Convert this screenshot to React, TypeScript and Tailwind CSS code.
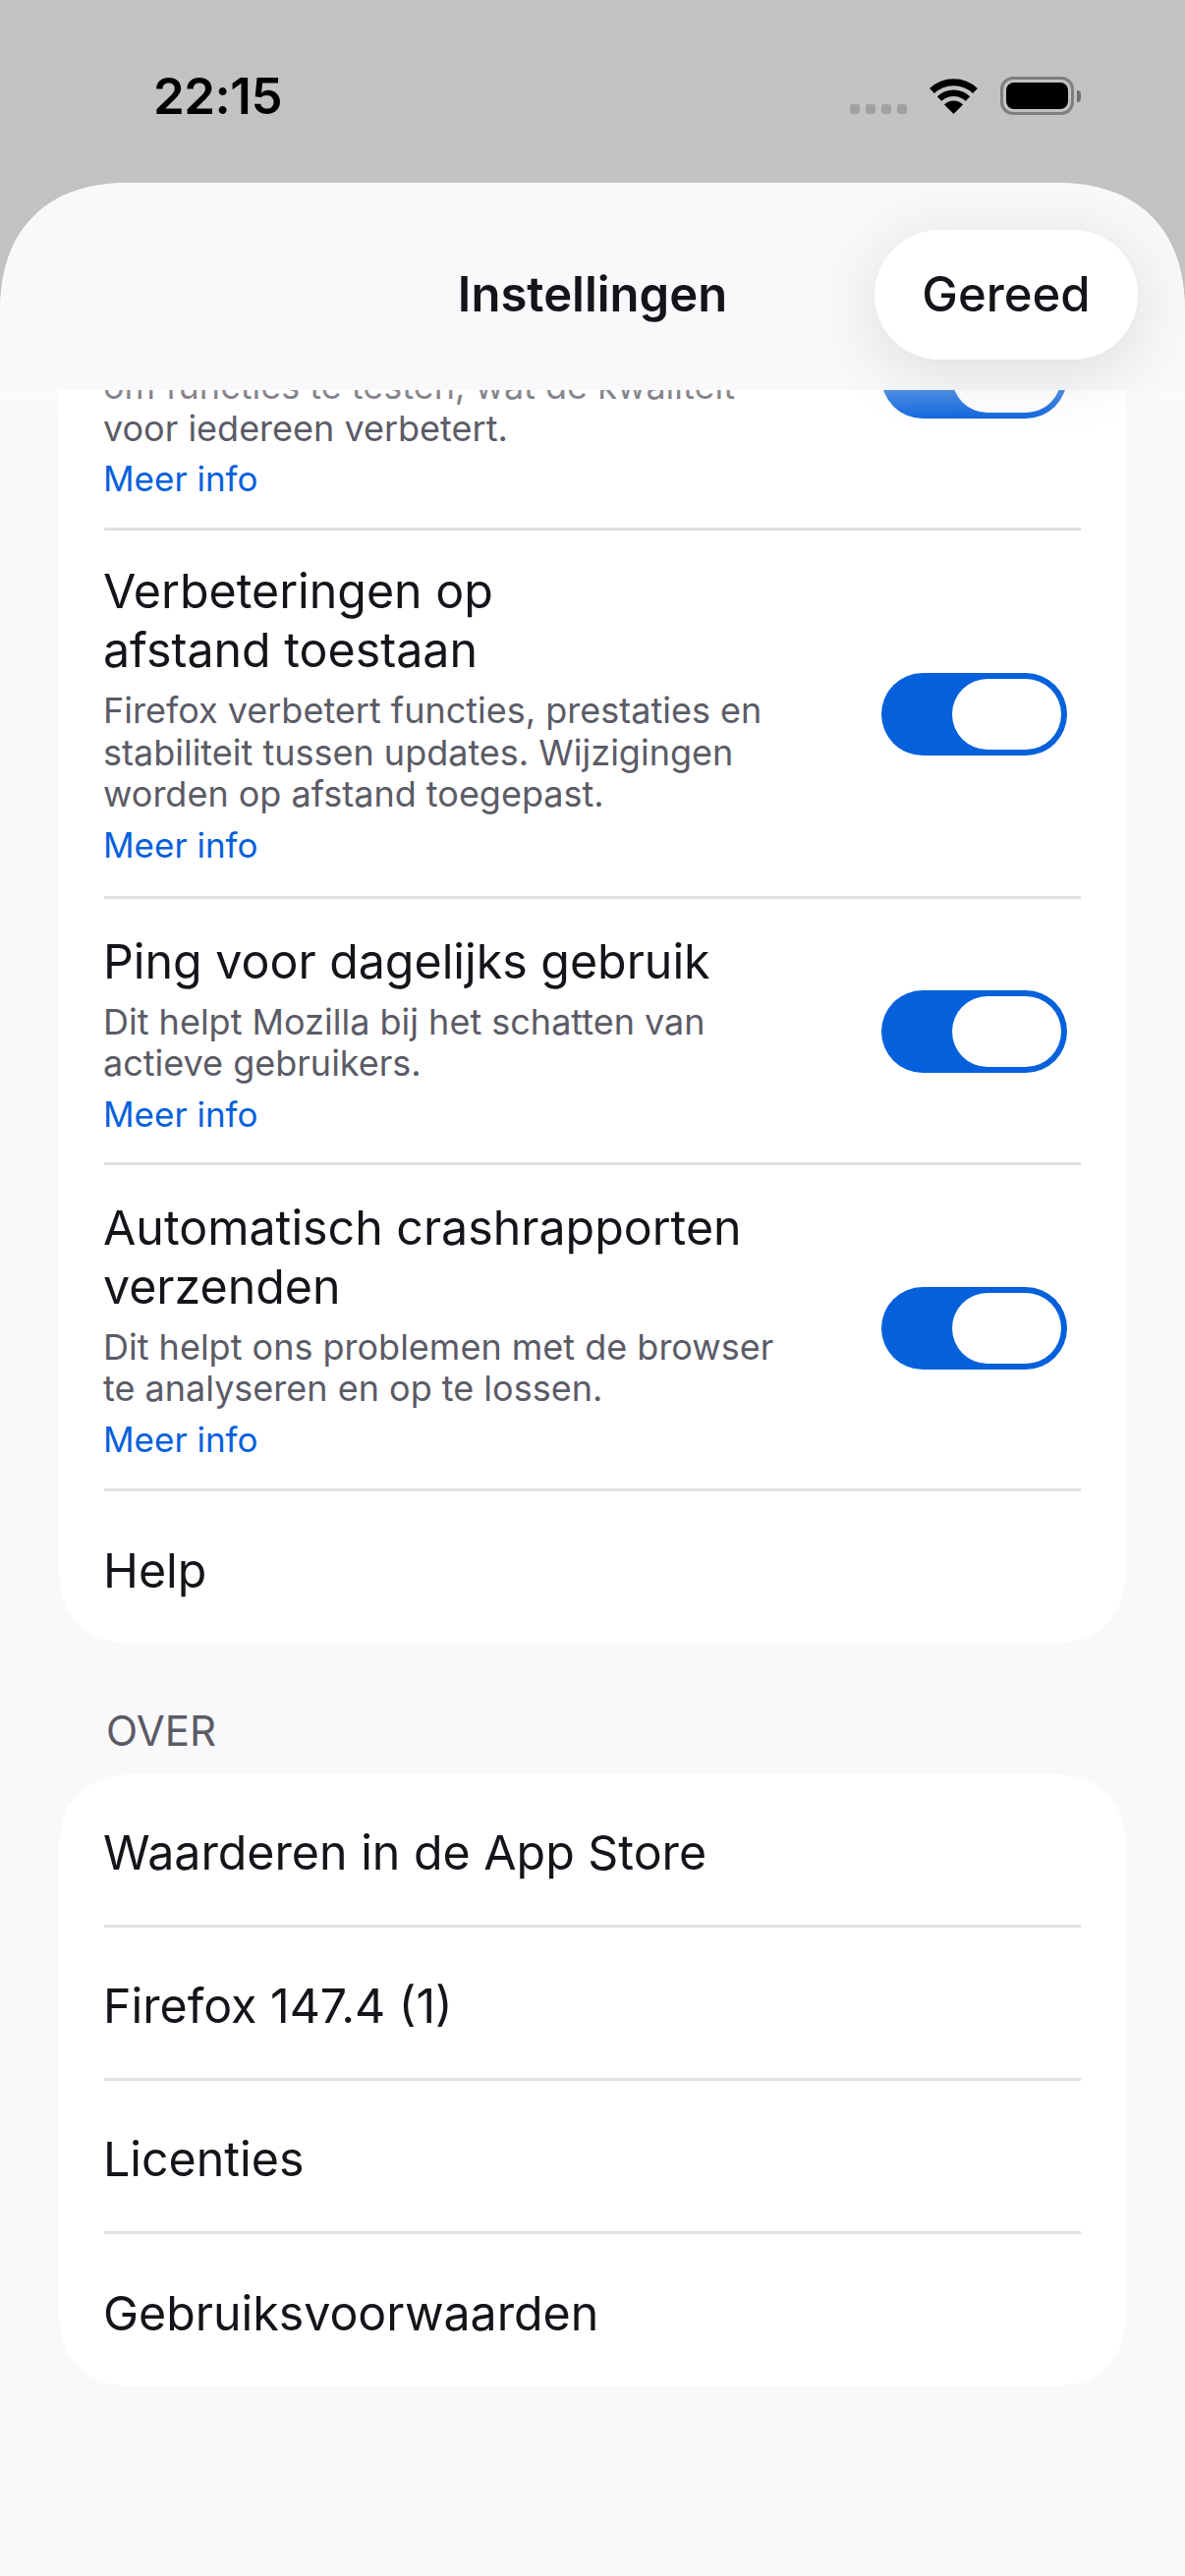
const ink = 'text-[#15141a]';

function StatusBar() {
  return (
    <div className="h-[186px] shrink-0 flex items-start justify-between pl-[156px] pr-[106px] pt-[68px]">
      <span className="text-[51px] leading-[60px] font-semibold text-black tracking-[-0.5px]">22:15</span>
      <div className="flex items-start pt-[10px]">
        <div className="flex gap-[6px] mt-[28px] mr-[22px]">
          <i className="block w-[10px] h-[10px] rounded-[3px] bg-[#a1a1a3]" />
          <i className="block w-[10px] h-[10px] rounded-[3px] bg-[#a1a1a3]" />
          <i className="block w-[10px] h-[10px] rounded-[3px] bg-[#a1a1a3]" />
          <i className="block w-[10px] h-[10px] rounded-[3px] bg-[#a1a1a3]" />
        </div>
        <svg width="51" height="37" viewBox="0 0 51 37" className="mt-[1px] mr-[22px]">
          <path d="M3.5 13.5A32 32 0 0 1 47.5 13.5" fill="none" stroke="#000" strokeWidth="7" />
          <path d="M11 21.5A21 21 0 0 1 40 21.5" fill="none" stroke="#000" strokeWidth="6.5" />
          <path d="M25.5 37L16 27.5A13.5 13.5 0 0 1 35 27.5Z" fill="#000" />
        </svg>
        <div className="flex items-center">
          <div className="w-[75px] h-[39px] rounded-[13px] border-[3px] border-[#7f7f81] p-[3px]">
            <div className="w-full h-full rounded-[8px] bg-black" />
          </div>
          <div className="w-[4px] h-[12px] ml-[3px] rounded-r-[4px] bg-[#6f6f71]" />
        </div>
      </div>
    </div>
  );
}

function Toggle() {
  return (
    <div className="w-[189px] h-[84px] shrink-0 mt-[3px] rounded-full bg-[#0560dc] p-[6px] flex justify-end">
      <div className="w-[111px] h-[72px] rounded-full bg-white" />
    </div>
  );
}

function Row({ title, lines, pad }: { title?: string[]; lines: string[]; pad: string }) {
  return (
    <div className="mx-[46px] flex items-center justify-between border-b-[3px] border-[#dfdfe4] pr-[14px]">
      <div className={`-ml-[1px] ${pad}`}>
        {title?.map((t) => (
          <div key={t} className={`text-[48.3px] leading-[60px] ${ink}`}>{t}</div>
        ))}
        <div className="mt-[10px]">
          {lines.map((l) => (
            <div key={l} className="text-[36px] leading-[42.5px] text-[#5b5b66]">{l}</div>
          ))}
        </div>
        <div className="text-[35px] leading-[42px] text-[#0560dc] mt-[9px]">Meer info</div>
      </div>
      <Toggle />
    </div>
  );
}

function PlainRow({ label, last }: { label: string; last?: boolean }) {
  return (
    <div className={`mx-[46px] flex items-center pt-[8px] text-[48.3px] ${ink} ${last ? 'h-[155px]' : 'h-[156px] border-b-[3px] border-[#dfdfe4]'}`}>
      <span className="-ml-[1px]">{label}</span>
    </div>
  );
}

export default function App() {
  return (
    <div className="w-[1206px] h-[2622px] overflow-hidden flex flex-col bg-gradient-to-b from-[#c3c3c5] to-[#b9b9bb] font-['Inter',sans-serif]">
      <StatusBar />

      <div className="flex-1 min-h-0 flex flex-col rounded-t-[135px] [corner-shape:superellipse(1.25)] bg-[#f9f9fb] overflow-hidden">
        {/* Header */}
        <div className="relative z-10 h-[211px] shrink-0 grid grid-cols-[1fr_auto_1fr] items-center px-[48px] pt-[17px] bg-[#f9f9fb]">
          <div />
          <div className={`text-[49px] font-semibold ${ink}`}>Instellingen</div>
          <div className={`justify-self-end w-[268px] h-[132px] rounded-full bg-white flex items-center justify-center text-[49px] font-medium ${ink} shadow-[0_12px_70px_rgba(0,0,0,0.12)]`}>
            Gereed
          </div>
        </div>

        {/* Scrolled settings */}
        <div className="relative flex-1 min-h-0 overflow-hidden">
          <div className="absolute z-[1] top-0 left-0 right-0 h-[36px] bg-gradient-to-b from-white/30 to-white/0" />
          <div className="-mt-[170px] mx-[60px] rounded-[80px] [corner-shape:superellipse(1.3)] bg-white">
            <Row
              pad="pt-[135px] pb-[29px]"
              lines={['om functies te testen, wat de kwaliteit', 'voor iedereen verbetert.']}
            />
            <Row
              pad="pt-[32px] pb-[31px]"
              title={['Verbeteringen op', 'afstand toestaan']}
              lines={['Firefox verbetert functies, prestaties en', 'stabiliteit tussen updates. Wijzigingen', 'worden op afstand toegepast.']}
            />
            <Row
              pad="pt-[34px] pb-[28px]"
              title={['Ping voor dagelijks gebruik']}
              lines={['Dit helpt Mozilla bij het schatten van', 'actieve gebruikers.']}
            />
            <Row
              pad="pt-[34px] pb-[29px]"
              title={['Automatisch crashrapporten', 'verzenden']}
              lines={['Dit helpt ons problemen met de browser', 'te analyseren en op te lossen.']}
            />
            <PlainRow label="Help" last />
          </div>

          <div className="mx-[108px] mt-[66px] mb-[21px] text-[42px] leading-[46px] text-[#5b5b66]">OVER</div>

          <div className="mx-[60px] rounded-[80px] [corner-shape:superellipse(1.3)] bg-white">
            <PlainRow label="Waarderen in de App Store" />
            <PlainRow label="Firefox 147.4 (1)" />
            <PlainRow label="Licenties" />
            <PlainRow label="Gebruiksvoorwaarden" last />
          </div>
        </div>
      </div>
    </div>
  );
}
